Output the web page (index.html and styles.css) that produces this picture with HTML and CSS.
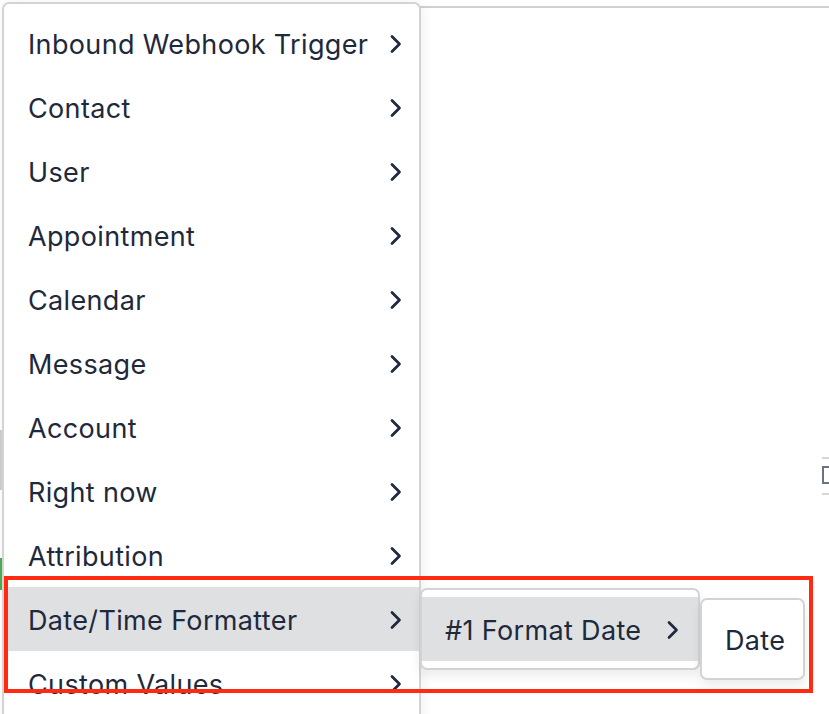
FILE: index.html
```html
<!DOCTYPE html>
<html>
<head>
<meta charset="utf-8">
<link rel="stylesheet" href="styles.css">
</head>
<body>
<div class="stage">
  <div class="backdrop">
    <div class="field"><span class="field-box"></span></div>
  </div>
  <div class="edge-mark"></div>
  <div class="green-mark"></div>
  <div class="menu">
    <div class="item"><span>Inbound Webhook Trigger</span><svg class="chev" viewBox="0 0 14 20"><polyline points="3,2.5 10.5,10 3,17.5"/></svg></div>
    <div class="item"><span>Contact</span><svg class="chev" viewBox="0 0 14 20"><polyline points="3,2.5 10.5,10 3,17.5"/></svg></div>
    <div class="item"><span>User</span><svg class="chev" viewBox="0 0 14 20"><polyline points="3,2.5 10.5,10 3,17.5"/></svg></div>
    <div class="item"><span>Appointment</span><svg class="chev" viewBox="0 0 14 20"><polyline points="3,2.5 10.5,10 3,17.5"/></svg></div>
    <div class="item"><span>Calendar</span><svg class="chev" viewBox="0 0 14 20"><polyline points="3,2.5 10.5,10 3,17.5"/></svg></div>
    <div class="item"><span>Message</span><svg class="chev" viewBox="0 0 14 20"><polyline points="3,2.5 10.5,10 3,17.5"/></svg></div>
    <div class="item"><span>Account</span><svg class="chev" viewBox="0 0 14 20"><polyline points="3,2.5 10.5,10 3,17.5"/></svg></div>
    <div class="item"><span>Right now</span><svg class="chev" viewBox="0 0 14 20"><polyline points="3,2.5 10.5,10 3,17.5"/></svg></div>
    <div class="item"><span>Attribution</span><svg class="chev" viewBox="0 0 14 20"><polyline points="3,2.5 10.5,10 3,17.5"/></svg></div>
    <div class="item active"><span>Date/Time Formatter</span><svg class="chev" viewBox="0 0 14 20"><polyline points="3,2.5 10.5,10 3,17.5"/></svg>
      <div class="submenu sub1">
        <div class="subitem active"><span>#1 Format Date</span><svg class="chev" viewBox="0 0 14 20"><polyline points="3,2.5 10.5,10 3,17.5"/></svg>
          <div class="submenu sub2">
            <div class="subitem"><span>Date</span></div>
          </div>
        </div>
      </div>
    </div>
    <div class="item"><span>Custom Values</span><svg class="chev" viewBox="0 0 14 20"><polyline points="3,2.5 10.5,10 3,17.5"/></svg></div>
  </div>
  <div class="annotation"></div>
</div>
</body>
</html>
```
FILE: styles.css
```css
* { box-sizing: border-box; }
html, body { margin: 0; padding: 0; background: #ffffff; }
body {
  font-family: Inter, "Noto Sans", "Liberation Sans", sans-serif;
  color: #1e293b;
}
.stage {
  position: relative;
  width: 829px;
  height: 714px;
  overflow: hidden;
}
.backdrop {
  position: absolute;
  left: 419px;
  top: 6px;
  right: 0;
  bottom: 0;
  border-top: 2px solid #d0d0d0;
  border-left: 2px solid #cfcfcf;
}
.field {
  position: absolute;
  left: 401px;
  top: 449px;
  width: 40px;
  height: 38px;
  border-top: 2px solid #d6d6d6;
  border-bottom: 2px solid #d6d6d6;
}
.field-box {
  display: block;
  margin-top: 7px;
  width: 12px;
  height: 18px;
  border: 2px solid #6b7280;
  border-right-color: transparent;
}
.edge-mark {
  position: absolute;
  left: 0;
  top: 430px;
  width: 2px;
  height: 60px;
  background: #cfcfcf;
}
.green-mark {
  position: absolute;
  left: 0;
  top: 558px;
  width: 2px;
  height: 32px;
  background: #4caf50;
}
.menu {
  position: absolute;
  left: 2px;
  top: 2px;
  width: 419px;
  height: 760px;
  background: #ffffff;
  border: 2px solid #d3d3d3;
  border-radius: 7px;
  padding: 7px 0;
  box-shadow: 2px 0 12px rgba(0, 0, 0, 0.06);
}
.item {
  position: relative;
  display: flex;
  align-items: center;
  justify-content: space-between;
  height: 64px;
  padding: 2px 16px 0 24px;
  font-size: 27px;
  letter-spacing: 0.35px;
}
.item.active { background: #dfe0e2; }
.chev {
  width: 14px;
  height: 20px;
  fill: none;
  stroke: #1e293b;
  stroke-width: 2.7;
  stroke-linecap: round;
  stroke-linejoin: round;
}
.submenu {
  position: absolute;
  background: #ffffff;
  border: 2px solid #d3d3d3;
  border-radius: 7px;
  padding: 7px 0;
  box-shadow: 0 6px 12px rgba(0, 0, 0, 0.08);
}
.sub1 {
  left: 416px;
  top: 1px;
  width: 280px;
}
.sub2 {
  left: 278px;
  top: 1px;
  width: 105px;
}
.subitem {
  position: relative;
  display: flex;
  align-items: center;
  justify-content: space-between;
  height: 64px;
  padding: 2px 18px 0 23px;
  font-size: 27px;
  letter-spacing: 0.35px;
}
.sub1 > .subitem.active { background: #dfe0e2; }
.annotation {
  position: absolute;
  left: 4px;
  top: 576px;
  width: 809px;
  height: 117px;
  border: 4px solid #fe2a12;
  pointer-events: none;
}
```
